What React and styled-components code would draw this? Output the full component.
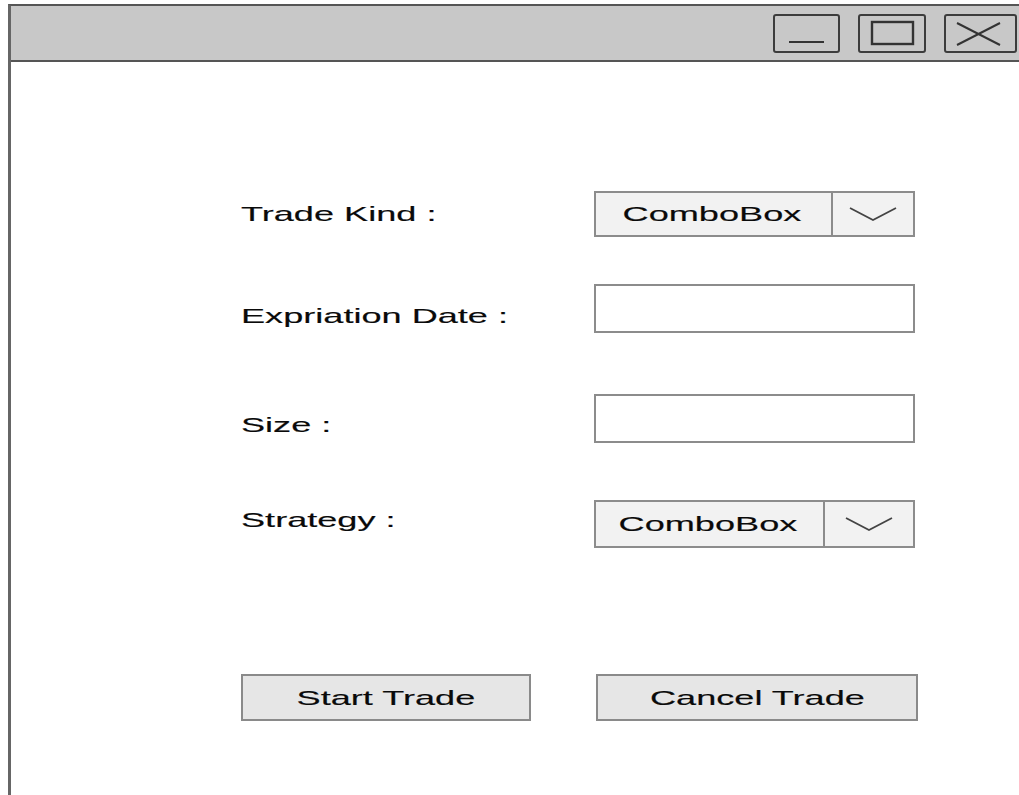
import React from 'react';
import styled, { createGlobalStyle } from 'styled-components';

const GlobalStyle = createGlobalStyle`
  html, body {
    margin: 0;
    padding: 0;
    background: #fff;
    overflow: hidden;
  }
  body {
    font-family: "Liberation Sans", Arial, sans-serif;
    color: #0a0a0a;
  }
`;

// Window frame
const Window = styled.div`
  margin: 4px 0 0 8px;
  height: 791px;
  border-left: 3px solid #666;
  border-top: 2px solid #555;
  display: flex;
  flex-direction: column;
`;

const TitleBar = styled.div`
  height: 54px;
  flex: none;
  background: #c8c8c8;
  border-bottom: 2px solid #555;
  display: flex;
  align-items: center;
  justify-content: flex-end;
  gap: 18px;
  padding-right: 2px;
`;

const CtrlButton = styled.div`
  width: ${p => p.w}px;
  height: 39px;
  box-sizing: border-box;
  border: 2px solid #3c3c3c;
  border-radius: 3px;
  display: flex;

  svg {
    width: 100%;
    height: 100%;
    display: block;
  }
`;

// Form area
const Form = styled.div`
  padding: 129px 0 0 230px;
  display: flex;
  flex-direction: column;
`;

const Row = styled.div`
  display: grid;
  grid-template-columns: 353px 321px;
  margin-top: ${p => p.top || 0}px;
`;

const Label = styled.div`
  padding-top: ${p => p.offset}px;
  font-size: 21px;
  line-height: 21px;
  white-space: nowrap;
`;

const Wide = styled.span`
  display: inline-block;
  white-space: nowrap;
  -webkit-text-stroke: 0.15px currentColor;
  transform: scaleX(1.72);
  transform-origin: ${p => (p.center ? 'center' : 'left')} center;
`;

const Combo = styled.div`
  height: ${p => p.h}px;
  box-sizing: border-box;
  border: 2px solid #8c8c8c;
  background: #f2f2f2;
  display: flex;
`;

const ComboText = styled.div`
  flex: 1;
  display: flex;
  align-items: center;
  justify-content: center;
  font-size: 21px;
  padding-right: 4px;
`;

const ComboArrow = styled.div`
  width: ${p => p.w}px;
  flex: none;
  border-left: 2px solid #8c8c8c;
  display: flex;
  align-items: center;
  justify-content: center;
`;

const TextInput = styled.div`
  height: 49px;
  box-sizing: border-box;
  border: 2px solid #8c8c8c;
  background: #fff;
`;

const ButtonRow = styled.div`
  display: grid;
  grid-template-columns: 355px 322px;
  margin-top: ${p => p.top}px;
`;

const Button = styled.div`
  width: ${p => p.w}px;
  height: 47px;
  box-sizing: border-box;
  border: 2px solid #8a8a8a;
  background: #e6e6e6;
  display: flex;
  align-items: center;
  justify-content: center;
  font-size: 21px;
`;

const Chevron = () => (
  <svg width="48" height="16" viewBox="0 0 48 16">
    <polyline points="1,2 24,14 47,2" fill="none" stroke="#444" strokeWidth="1.8" />
  </svg>
);

const ComboBox = ({ h, arrowW }) => (
  <Combo h={h}>
    <ComboText>
      <Wide center>ComboBox</Wide>
    </ComboText>
    <ComboArrow w={arrowW}>
      <Chevron />
    </ComboArrow>
  </Combo>
);

const App = () => (
  <>
    <GlobalStyle />
    <Window>
      <TitleBar>
        <CtrlButton w={67}>
          <svg viewBox="0 0 63 35">
            <line x1="14" y1="26" x2="49" y2="26" stroke="#333" strokeWidth="2.2" />
          </svg>
        </CtrlButton>
        <CtrlButton w={68}>
          <svg viewBox="0 0 64 35">
            <rect x="12" y="6" width="41" height="22" fill="none" stroke="#333" strokeWidth="2.4" />
          </svg>
        </CtrlButton>
        <CtrlButton w={73}>
          <svg viewBox="0 0 69 35">
            <line x1="11" y1="7" x2="54" y2="29" stroke="#333" strokeWidth="2" />
            <line x1="11" y1="29" x2="54" y2="7" stroke="#333" strokeWidth="2" />
          </svg>
        </CtrlButton>
      </TitleBar>

      <Form>
        <Row>
          <Label offset={12}>
            <Wide>Trade Kind :</Wide>
          </Label>
          <ComboBox h={46} arrowW={80} />
        </Row>
        <Row top={47}>
          <Label offset={21}>
            <Wide>Expriation Date :</Wide>
          </Label>
          <TextInput />
        </Row>
        <Row top={61}>
          <Label offset={20}>
            <Wide>Size :</Wide>
          </Label>
          <TextInput />
        </Row>
        <Row top={57}>
          <Label offset={9}>
            <Wide>Strategy :</Wide>
          </Label>
          <ComboBox h={48} arrowW={88} />
        </Row>
        <ButtonRow top={126}>
          <Button w={290}>
            <Wide center>Start Trade</Wide>
          </Button>
          <Button w={322}>
            <Wide center>Cancel Trade</Wide>
          </Button>
        </ButtonRow>
      </Form>
    </Window>
  </>
);

export default App;
